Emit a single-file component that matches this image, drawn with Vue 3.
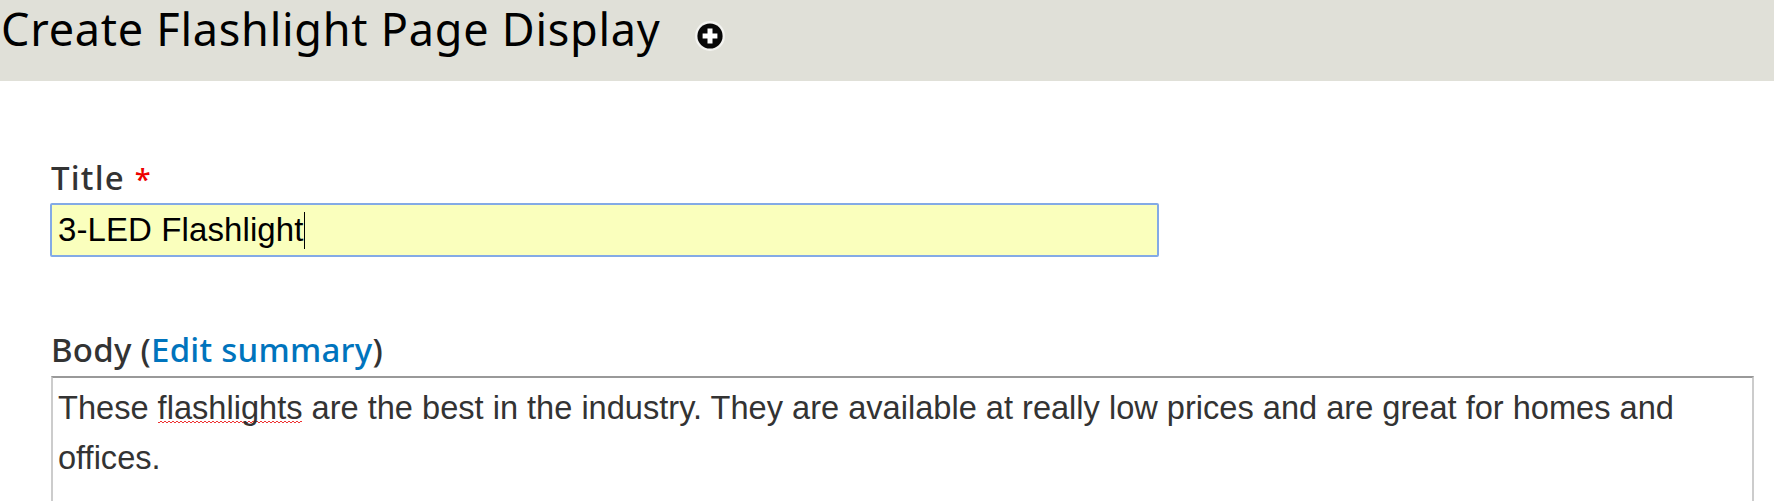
<script setup>
import { ref } from 'vue'

const title = ref('3-LED Flashlight')
</script>

<template>
  <div class="page">
    <header class="branding">
      <h1 class="page-title">Create Flashlight Page Display</h1>
      <svg class="shortcut" viewBox="0 0 30 30" aria-hidden="true">
        <circle cx="15" cy="15" r="15" fill="#f3f3f0" />
        <circle cx="15" cy="15" r="12.6" fill="#080808" />
        <path d="M15 7.6v14.8M7.6 15h14.8" stroke="#fff" stroke-width="5" />
      </svg>
    </header>
    <main class="form">
      <label class="label title-label">Title <span class="required">*</span></label>
      <div class="input"><span class="value">{{ title }}</span><span class="caret"></span></div>
      <label class="label body-label">Body (<a class="link">Edit summary</a>)</label>
      <div class="textarea">These <span class="misspelt">flashlights</span> are the best in the industry. They are available at really low prices and are great for homes and<br>offices.</div>
    </main>
  </div>
</template>

<style>
body {
  background: #fff;
}
</style>

<style scoped>
.page {
  width: 1774px;
  height: 501px;
  overflow: hidden;
  background: #fff;
  font-family: "Lucida Grande", "Lucida Sans Unicode", "Noto Sans", sans-serif;
  color: #333;
}
.branding {
  display: flex;
  align-items: flex-start;
  box-sizing: border-box;
  height: 81px;
  background: #e0e0d8;
}
.page-title {
  width: 695px;
  margin: 0;
  padding-left: 1px;
  box-sizing: border-box;
  font-size: 45px;
  font-weight: 400;
  line-height: 57px;
  letter-spacing: 0.75px;
  white-space: nowrap;
  color: #000;
}
.shortcut {
  width: 30px;
  height: 30px;
  margin-top: 21px;
}
.form {
  display: flex;
  flex-direction: column;
  padding: 75px 20px 0 50px;
}
.label {
  height: 47px;
  padding-left: 1px;
  font-size: 33px;
  font-weight: 500;
  line-height: 44px;
  white-space: pre;
}
.title-label {
  letter-spacing: 1.2px;
}
.required {
  font-size: 29px;
  color: #e00;
}
.input {
  display: flex;
  align-items: center;
  box-sizing: border-box;
  width: 1109px;
  height: 54px;
  padding-left: 6px;
  border: 2px solid #83aae6;
  border-radius: 2px;
  background: #faffbd;
  color: #000;
  font: 33px "Liberation Sans", Arial, sans-serif;
  letter-spacing: 0.1px;
}
.caret {
  width: 1px;
  height: 37px;
  background: #000;
}
.body-label {
  height: 48px;
  margin-top: 71px;
  font-weight: 550;
  letter-spacing: 0.25px;
}
.link {
  color: #0074bd;
}
.textarea {
  box-sizing: border-box;
  width: 1703px;
  height: 140px;
  margin-left: 1px;
  padding: 5px 0 0 5px;
  border: 2px solid #ccc;
  border-top-color: #999;
  border-bottom: 0;
  font: 32.6px/50px "Liberation Sans", Arial, sans-serif;
  white-space: nowrap;
}
.misspelt {
  background: repeating-conic-gradient(#e33 0 25%, transparent 0 50%) 0 calc(100% - 3px) / 4px 2px repeat-x;
}
</style>
